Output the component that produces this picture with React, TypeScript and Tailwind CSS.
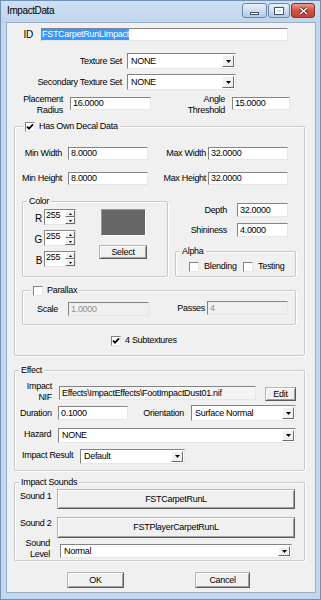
import type { ReactNode } from 'react'

const sunken = 'border border-t-[#848484] border-l-[#848484] border-b-[#e6e6e6] border-r-[#e6e6e6]'
const raised = 'border border-t-[#ffffff] border-l-[#ffffff] border-b-[#6b6b6b] border-r-[#6b6b6b]'

function TextBox({ value, className = '', disabled }: { value?: ReactNode; className?: string; disabled?: boolean }) {
  return (
    <div className={`flex items-center pl-[2px] overflow-hidden whitespace-nowrap ${sunken} ${disabled ? 'bg-[#f0f0f0] text-[#8e8e8e]' : 'bg-white'} ${className}`}>
      {value}
    </div>
  )
}

function Combo({ value, className = '' }: { value: string; className?: string }) {
  return (
    <div className={`flex items-stretch bg-white ${sunken} ${className}`}>
      <span className="flex-1 flex items-center pl-[3px] whitespace-nowrap overflow-hidden">{value}</span>
      <span className={`w-[12px] m-[1px] flex items-center justify-center bg-[#f0f0f0] ${raised}`}>
        <svg width="5" height="3" viewBox="0 0 5 3"><path d="M0 0h5L2.5 3z" fill="#000" /></svg>
      </span>
    </div>
  )
}

function PushButton({ children, className = '' }: { children: ReactNode; className?: string }) {
  return (
    <button type="button"
      className={`flex items-center justify-center bg-[#f0f0f0] border border-t-[#b4b4b4] border-l-[#b4b4b4] border-b-[#5a5a5a] border-r-[#5a5a5a] shadow-[inset_1px_1px_0_#ffffff,inset_-1px_-1px_0_#a0a0a0] ${className}`}>
      {children}
    </button>
  )
}

function CheckBox({ checked }: { checked?: boolean }) {
  return (
    <span className={`w-[10px] h-[10px] shrink-0 bg-white flex items-center justify-center ${sunken}`}>
      {checked && (
        <svg width="8" height="8" viewBox="0 0 8 8">
          <path d="M1 3.6l2 2.1L7 1.4" stroke="#000" strokeWidth="1.7" fill="none" />
        </svg>
      )}
    </span>
  )
}

function GroupBox({ legend, className = '', legendLeft = 'left-[4px]', children }: {
  legend: ReactNode; className?: string; legendLeft?: string; children?: ReactNode
}) {
  return (
    <div className={`relative border border-[#c8c8c8] rounded-[2px] shadow-[inset_1px_1px_0_#ffffff,1px_1px_0_#ffffff] ${className}`}>
      <div className={`absolute -top-[6px] ${legendLeft} h-[11px] px-[2px] flex items-center gap-[3px] bg-[#f0f0f0]`}>
        {legend}
      </div>
      {children}
    </div>
  )
}

function Spin({ value }: { value: string }) {
  return (
    <div className={`flex w-[32px] h-[16px] bg-white ${sunken}`}>
      <span className="flex-1 pl-[1px] leading-[11px]">{value}</span>
      <span className="w-[10px] flex flex-col">
        <span className={`flex-1 flex items-center justify-center bg-[#f0f0f0] ${raised}`}>
          <svg width="3" height="2" viewBox="0 0 3 2"><path d="M0 2h3L1.5 0z" fill="#000" /></svg>
        </span>
        <span className={`flex-1 flex items-center justify-center bg-[#f0f0f0] ${raised}`}>
          <svg width="3" height="2" viewBox="0 0 3 2"><path d="M0 0h3L1.5 2z" fill="#000" /></svg>
        </span>
      </span>
    </div>
  )
}

export default function App() {
  return (
    <div className="w-[321px] h-[600px] flex flex-col bg-[#c3d7ed] border border-[#7090b6] text-[9px] leading-[11px] tracking-[-0.3px] text-black font-['Liberation_Sans',Arial,sans-serif]">

      {/* Title bar */}
      <div className="h-[22px] flex items-start bg-linear-to-b from-[#cfe0f2] to-[#bfd4eb]">
        <span className="ml-[6px] mt-[4px] text-[10px] leading-[12px] tracking-[-0.4px]">ImpactData</span>
        <div className="ml-auto mr-[5px] mt-[2px] flex gap-[1px]">
          <span className="w-[25px] h-[15px] rounded-[3px] border border-[#6c86a8] bg-linear-to-b from-[#e8f0fa] to-[#b3c9e3] flex items-center justify-center">
            <span className="mt-[5px] w-[9px] h-[3px] bg-white border border-[#44556b]" />
          </span>
          <span className="w-[22px] h-[15px] rounded-[3px] border border-[#6c86a8] bg-linear-to-b from-[#e8f0fa] to-[#b3c9e3] flex items-center justify-center">
            <span className="w-[8px] h-[6px] border-[2px] border-white outline outline-1 outline-[#44556b]" />
          </span>
          <span className="w-[24px] h-[15px] rounded-[3px] border border-[#8a2f27] bg-linear-to-b from-[#e59a8c] via-[#cf5443] to-[#c6402e] flex items-center justify-center">
            <svg width="9" height="8" viewBox="0 0 9 8">
              <path d="M1 1l7 6M8 1L1 7" stroke="#5a1a14" strokeWidth="3" />
              <path d="M1 1l7 6M8 1L1 7" stroke="#ffffff" strokeWidth="1.6" />
            </svg>
          </span>
        </div>
      </div>

      {/* Client area */}
      <div className="ml-[6px] w-[308px] h-[569px] bg-[#f0f0f0] ring-1 ring-[#97adca] flex flex-col">

        {/* ID */}
        <div className="mt-[5px] flex items-center h-[13px]">
          <span className="w-[26px] text-right text-[10px]">ID</span>
          <TextBox className="ml-[8px] w-[247px] h-[13px] !pl-0"
            value={<span className="bg-[#3399ff] text-white leading-[11px]">FSTCarpetRunLImpact</span>} />
        </div>

        {/* Texture sets */}
        <div className="mt-[12px] flex items-center">
          <span className="w-[115px] text-right">Texture Set</span>
          <Combo className="ml-[5px] w-[109px] h-[16px]" value="NONE" />
        </div>
        <div className="mt-[5px] flex items-center">
          <span className="w-[115px] text-right">Secondary Texture Set</span>
          <Combo className="ml-[5px] w-[109px] h-[16px]" value="NONE" />
        </div>

        {/* Placement / angle */}
        <div className="mt-[4px] flex items-start h-[24px]">
          <span className="w-[56px] text-right">Placement<br />Radius</span>
          <TextBox className="ml-[7px] mt-[3px] w-[81px] h-[13px]" value="16.0000" />
          <span className="w-[74px] text-right">Angle<br />Threshold</span>
          <TextBox className="ml-[7px] mt-[3px] w-[58px] h-[13px]" value="15.0000" />
        </div>

        {/* Decal data */}
        <GroupBox className="mt-[8px] ml-[7px] w-[291px] h-[230px] flex flex-col" legendLeft="left-[8px]"
          legend={<><CheckBox checked /><span className="ml-[1px]">Has Own Decal Data</span></>}>

          <div className="mt-[20px] flex items-center">
            <span className="w-[47px] text-right">Min Width</span>
            <TextBox className="ml-[6px] w-[80px] h-[13px]" value="8.0000" />
            <span className="w-[58px] text-right">Max Width</span>
            <TextBox className="ml-[2px] w-[80px] h-[13px]" value="32.0000" />
          </div>
          <div className="mt-[12px] flex items-center">
            <span className="w-[47px] text-right">Min Height</span>
            <TextBox className="ml-[6px] w-[80px] h-[13px]" value="8.0000" />
            <span className="w-[58px] text-right">Max Height</span>
            <TextBox className="ml-[2px] w-[80px] h-[13px]" value="32.0000" />
          </div>

          <div className="mt-[16px] flex items-start">
            {/* Color */}
            <GroupBox className="ml-[7px] w-[146px] h-[76px] flex" legend={<span>Color</span>}>
              <div className="mt-[7px] flex flex-col gap-[5px]">
                {['R', 'G', 'B'].map(c => (
                  <div key={c} className="flex items-center">
                    <span className="w-[19px] text-right text-[10px] mt-[3px]">{c}</span>
                    <span className="ml-[2px]"><Spin value="255" /></span>
                  </div>
                ))}
              </div>
              <div className="flex flex-col items-start">
                <span className="mt-[7px] ml-[25px] w-[45px] h-[27px] bg-[#666666] border border-t-[#9a9a9a] border-l-[#9a9a9a] border-b-[#ffffff] border-r-[#ffffff]" />
                <PushButton className="mt-[9px] ml-[23px] w-[48px] h-[14px]">Select</PushButton>
              </div>
            </GroupBox>

            {/* Depth / shininess / alpha */}
            <div className="flex flex-col">
              <div className="mt-[2px] flex items-center">
                <span className="w-[59px] text-right">Depth</span>
                <TextBox className="ml-[10px] w-[51px] h-[14px]" value="32.0000" />
              </div>
              <div className="mt-[6px] flex items-center">
                <span className="w-[59px] text-right">Shininess</span>
                <TextBox className="ml-[10px] w-[51px] h-[14px]" value="4.0000" />
              </div>
              <GroupBox className="mt-[14px] ml-[7px] w-[121px] h-[26px]" legend={<span>Alpha</span>}>
                <div className="mt-[9px] ml-[13px] flex items-center">
                  <span className="w-[54px] flex items-center gap-[5px]"><CheckBox /><span>Blending</span></span>
                  <span className="flex items-center gap-[5px]"><CheckBox /><span>Testing</span></span>
                </div>
              </GroupBox>
            </div>
          </div>

          {/* Parallax */}
          <GroupBox className="mt-[13px] ml-[7px] w-[274px] h-[35px]" legendLeft="left-[8px]"
            legend={<><CheckBox /><span className="ml-[1px]">Parallax</span></>}>
            <div className="mt-[11px] flex items-start">
              <span className="w-[35px] text-right mt-[2px]">Scale</span>
              <TextBox disabled className="ml-[10px] w-[81px] h-[14px]" value="1.0000" />
              <span className="w-[56px] text-right mt-[1px]">Passes</span>
              <TextBox disabled className="ml-[2px] -mt-[1px] w-[81px] h-[14px]" value="4" />
            </div>
          </GroupBox>

          <div className="mt-[10px] ml-[96px] flex items-center gap-[4px]">
            <CheckBox checked /><span>4 Subtextures</span>
          </div>
        </GroupBox>

        {/* Effect */}
        <GroupBox className="mt-[14px] ml-[7px] w-[291px] h-[101px] flex flex-col" legend={<span>Effect</span>}>
          <div className="mt-[10px] flex items-start">
            <span className="w-[37px] text-right">Impact<br />NIF</span>
            <TextBox className="ml-[7px] mt-[5px] w-[197px] h-[14px] !bg-[#f4f4f4]" value="Effects\ImpactEffects\FootImpactDust01.nif" />
            <PushButton className="ml-[9px] mt-[6px] w-[31px] h-[14px]">Edit</PushButton>
          </div>
          <div className="mt-[2px] flex items-center">
            <span className="ml-[5px] w-[38px]">Duration</span>
            <TextBox className="w-[70px] h-[14px]" value="0.1000" />
            <span className="w-[56px] text-right">Orientation</span>
            <Combo className="ml-[7px] w-[105px] h-[16px]" value="Surface Normal" />
          </div>
          <div className="mt-[7px] flex items-center">
            <span className="ml-[9px] w-[34px] -mt-[3px]">Hazard</span>
            <Combo className="w-[238px] h-[15px]" value="NONE" />
          </div>
          <div className="mt-[6px] flex items-center">
            <span className="ml-[7px] w-[58px] -mt-[3px]">Impact Result</span>
            <Combo className="w-[105px] h-[15px]" value="Default" />
          </div>
        </GroupBox>

        {/* Impact sounds */}
        <GroupBox className="mt-[11px] ml-[7px] w-[291px] h-[79px] flex flex-col" legend={<span>Impact Sounds</span>}>
          <div className="mt-[6px] flex items-start">
            <span className="ml-[5px] w-[37px] mt-[2px]">Sound 1</span>
            <PushButton className="w-[238px] h-[20px]">FSTCarpetRunL</PushButton>
          </div>
          <div className="mt-[8px] flex items-start">
            <span className="ml-[5px] w-[37px] mt-[1px]">Sound 2</span>
            <PushButton className="w-[238px] h-[21px]">FSTPlayerCarpetRunL</PushButton>
          </div>
          <div className="flex items-start">
            <span className="w-[35px] text-right">Sound<br />Level</span>
            <Combo className="ml-[10px] mt-[6px] w-[232px] h-[14px]" value="Normal" />
          </div>
        </GroupBox>

        {/* Dialog buttons */}
        <div className="mt-[11px] flex">
          <PushButton className="ml-[60px] w-[57px] h-[16px]">OK</PushButton>
          <PushButton className="ml-[71px] w-[55px] h-[16px]">Cancel</PushButton>
        </div>
      </div>
    </div>
  )
}
